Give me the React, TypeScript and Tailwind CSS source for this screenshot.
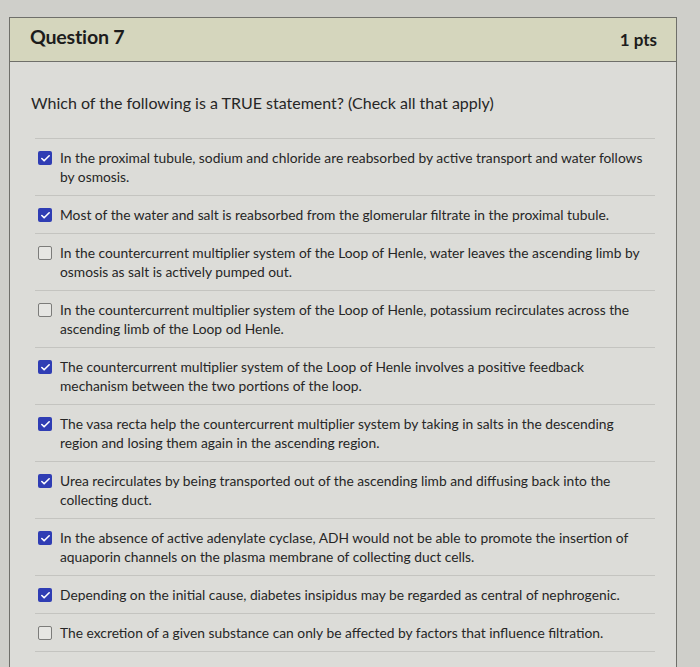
import { Check } from "lucide-react";

type Choice = {
  id: number;
  text: string;
  checked: boolean;
};

const CHOICES: Choice[] = [
  {
    id: 1,
    text: "In the proximal tubule, sodium and chloride are reabsorbed by active transport and water follows by osmosis.",
    checked: true,
  },
  {
    id: 2,
    text: "Most of the water and salt is reabsorbed from the glomerular filtrate in the proximal tubule.",
    checked: true,
  },
  {
    id: 3,
    text: "In the countercurrent multiplier system of the Loop of Henle, water leaves the ascending limb by osmosis as salt is actively pumped out.",
    checked: false,
  },
  {
    id: 4,
    text: "In the countercurrent multiplier system of the Loop of Henle, potassium recirculates across the ascending limb of the Loop od Henle.",
    checked: false,
  },
  {
    id: 5,
    text: "The countercurrent multiplier system of the Loop of Henle involves a positive feedback mechanism between the two portions of the loop.",
    checked: true,
  },
  {
    id: 6,
    text: "The vasa recta help the countercurrent multiplier system by taking in salts in the descending region and losing them again in the ascending region.",
    checked: true,
  },
  {
    id: 7,
    text: "Urea recirculates by being transported out of the ascending limb and diffusing back into the collecting duct.",
    checked: true,
  },
  {
    id: 8,
    text: "In the absence of active adenylate cyclase, ADH would not be able to promote the insertion of aquaporin channels on the plasma membrane of collecting duct cells.",
    checked: true,
  },
  {
    id: 9,
    text: "Depending on the initial cause, diabetes insipidus may be regarded as central of nephrogenic.",
    checked: true,
  },
  {
    id: 10,
    text: "The excretion of a given substance can only be affected by factors that influence filtration.",
    checked: false,
  },
];

function Checkbox({ checked }: { checked: boolean }) {
  if (checked) {
    return (
      <span className="mt-[3px] flex h-[14px] w-[14px] shrink-0 items-center justify-center rounded-[2px] bg-[#2f3db4]">
        <Check className="h-[11px] w-[11px] text-white" strokeWidth={3.5} />
      </span>
    );
  }
  return (
    <span className="mt-[3px] h-[14px] w-[14px] shrink-0 rounded-[2px] border border-[#7c7c7a] bg-[#e6e6e3]" />
  );
}

function ChoiceRow({ choice }: { choice: Choice }) {
  return (
    <li className="flex gap-[8px] border-b border-[#c4c4c0] py-[9px] pl-[3px] pr-[8px]">
      <Checkbox checked={choice.checked} />
      <span className="max-w-[592px] text-[13.8px] leading-[19px] text-[#262626]">
        {choice.text}
      </span>
    </li>
  );
}

export default function App() {
  return (
    <div
      className="min-h-[667px] w-[700px] bg-[#cfcfca] pt-[17px] pb-[4px]"
      style={{ fontFamily: "Lato, 'Open Sans', sans-serif" }}
    >
      <div className="ml-[9px] w-[668px] border border-[#6f6f6a] bg-[#dcdcd8]">
        {/* Header */}
        <div className="flex h-[44px] items-center justify-between border-b border-[#6f6f6a] bg-[#d5d6bd] pl-[20px] pr-[19px]">
          <h2 className="-mt-[6px] text-[19.6px] font-bold tracking-[-0.2px] text-[#1c1c1c]">
            Question 7
          </h2>
          <span className="text-[17px] font-bold text-[#1c1c1c]">1 pts</span>
        </div>

        {/* Body */}
        <div className="pl-[21px] pr-[21px] pt-[30px] pb-[30px]">
          <p className="text-[16px] leading-[21px] text-[#262626]">
            Which of the following is a TRUE statement? (Check all that apply)
          </p>
          <ul className="mt-[25px] ml-[4px] border-t border-[#c4c4c0]">
            {CHOICES.map((c) => (
              <ChoiceRow key={c.id} choice={c} />
            ))}
          </ul>
        </div>
      </div>
    </div>
  );
}
